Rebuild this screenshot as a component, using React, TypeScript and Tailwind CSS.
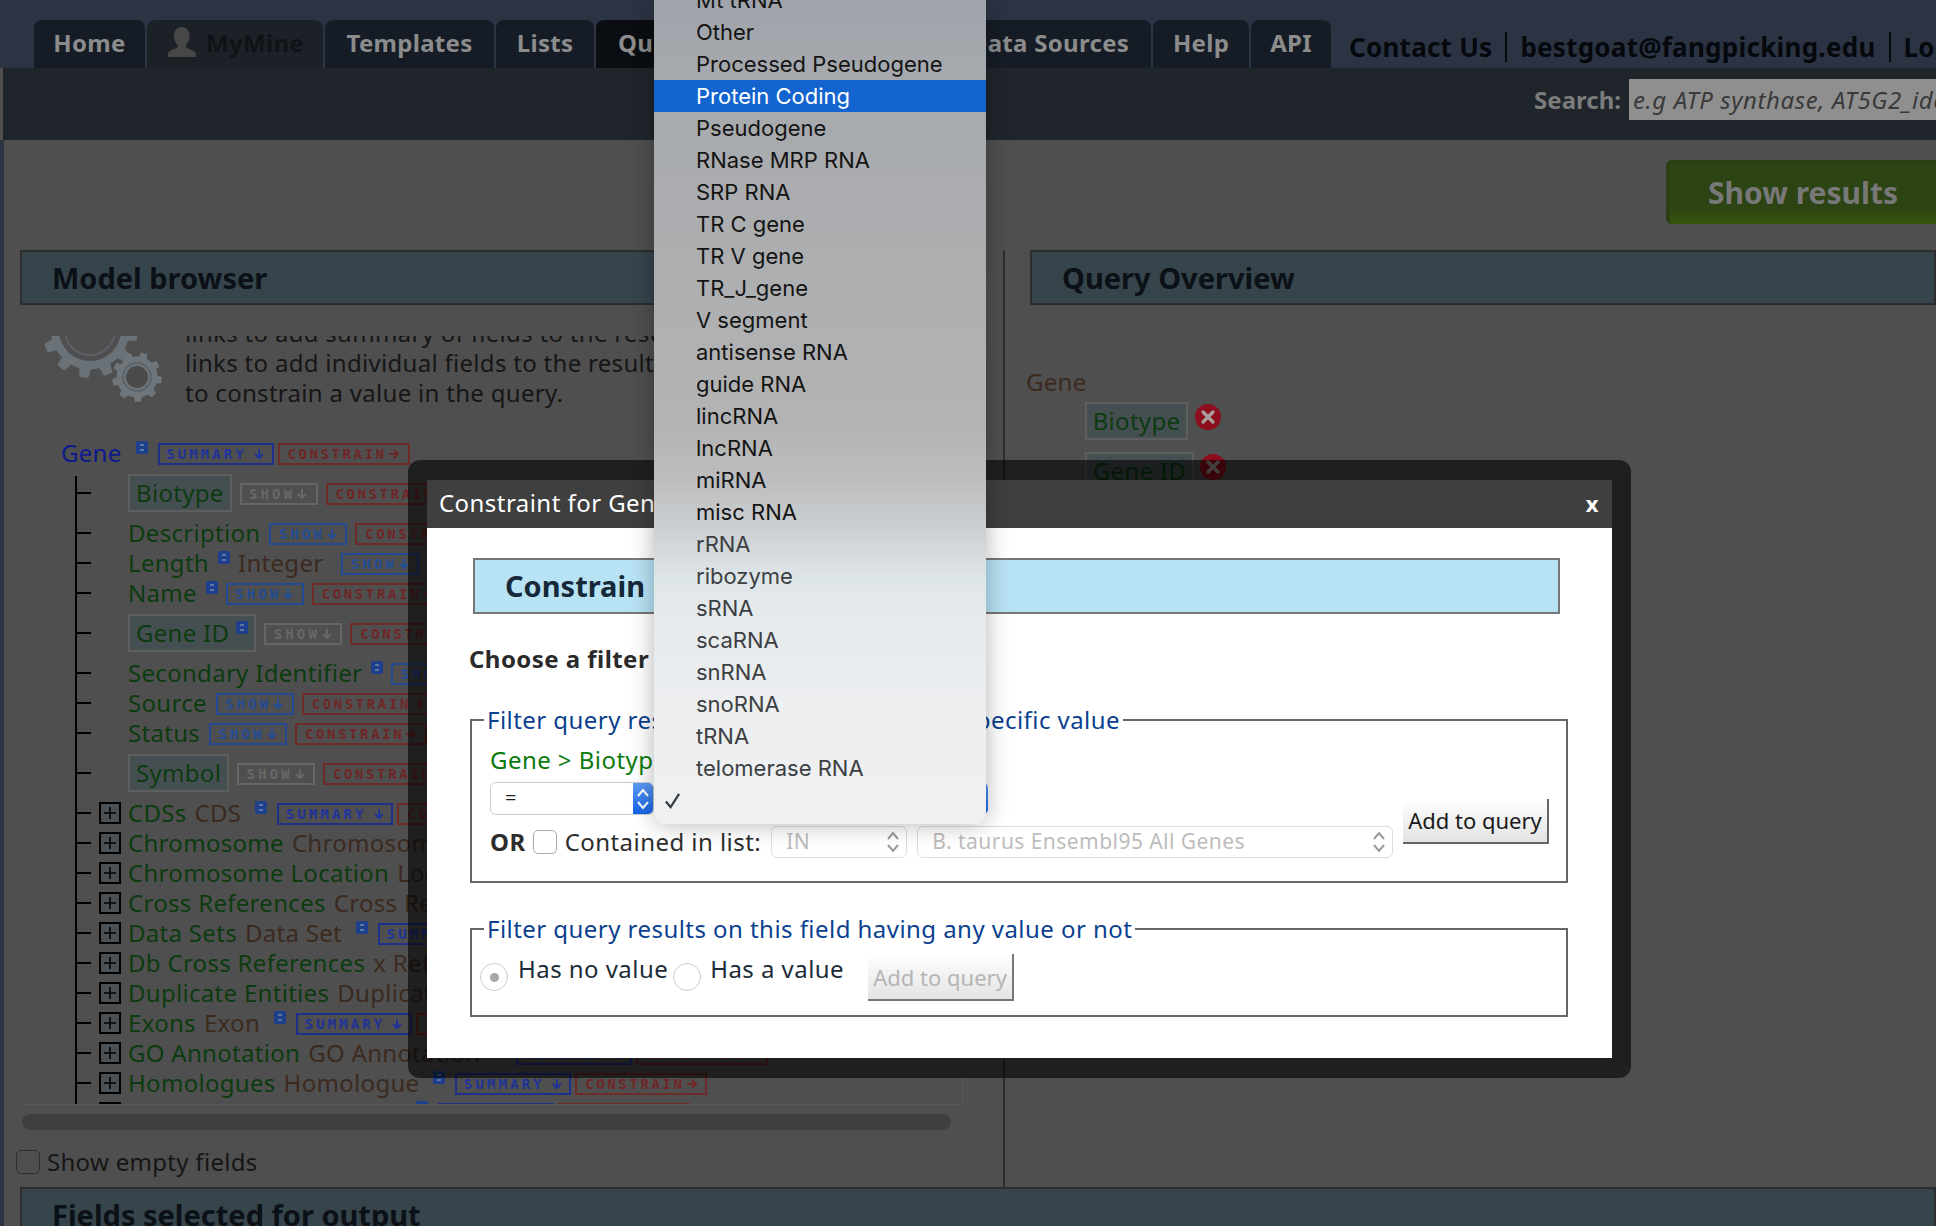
import React from "react";

function gearPoints(cx: number, cy: number, r: number, teeth: number) {
  const out: string[] = [];
  const inner = r * 0.82;
  for (let i = 0; i < teeth; i++) {
    const a = (i / teeth) * Math.PI * 2 + 0.13;
    const w = (Math.PI * 2) / teeth;
    const pts: [number, number][] = [
      [inner, a - w * 0.5],
      [inner, a - w * 0.28],
      [r, a - w * 0.18],
      [r, a + w * 0.18],
      [inner, a + w * 0.28],
    ];
    pts.forEach(([rr, t]) => out.push(`${(cx + rr * Math.cos(t)).toFixed(1)},${(cy + rr * Math.sin(t)).toFixed(1)}`));
  }
  return out.join(" ");
}

function Gears() {
  return (
    <svg viewBox="0 0 120 68" className="w-[120px] h-[68px] shrink-0 mt-[18px] ml-[22px] mr-[23px]" aria-hidden="true">
      <polygon points={gearPoints(48, -6, 48, 12)} fill="#6a7177" />
      <circle cx="48" cy="-6" r="31" fill="#4f4f4f" />
      <circle cx="48" cy="-6" r="25" fill="none" stroke="#5a6066" strokeWidth="2" />
      <polygon points={gearPoints(95, 41, 25, 9)} fill="#6e757b" />
      <circle cx="95" cy="41" r="11" fill="#4b4b4b" />
      <circle cx="95" cy="41" r="14" fill="none" stroke="#5c6369" strokeWidth="2" />
    </svg>
  );
}

function Info() {
  return (
    <span className="w-[12px] h-[13px] mb-[12px] bg-[#1d3f8e] rounded-[2px] flex items-center justify-center shrink-0">
      <span className="w-[4px] h-[7px] border-y-2 border-[#5f769f]" />
    </span>
  );
}

function Arrow({ dir, color }: { dir: "down" | "right"; color: string }) {
  return (
    <svg viewBox="0 0 12 12" className="w-[12px] h-[12px] shrink-0" aria-hidden="true" fill="none" stroke={color} strokeWidth="2">
      {dir === "down" ? <path d="M6 1v9M2 6l4 4 4-4" /> : <path d="M1 6h9M6 2l4 4-4 4" />}
    </svg>
  );
}

function Tag({ kind, dim }: { kind: "SUMMARY" | "SHOW" | "CONSTRAIN"; dim?: boolean }) {
  if (kind === "SUMMARY")
    return (
      <span className="w-[116px] h-[22px] mt-[2px] border-2 border-[#1e2f8c] text-[#1f3399] flex items-center justify-center gap-[6px] shrink-0 font-['DejaVu_Sans_Mono',monospace] font-bold text-[14px] leading-none tracking-[3.1px]">
        SUMMARY
        <Arrow dir="down" color="#1f3399" />
      </span>
    );
  if (kind === "SHOW")
    return (
      <span
        className={
          dim
            ? "w-[78px] h-[22px] mt-[2px] border-2 border-[#666] text-[#686868] flex items-center justify-center gap-[1px] shrink-0 font-['DejaVu_Sans_Mono',monospace] font-bold text-[14px] leading-none tracking-[3.1px]"
            : "w-[78px] h-[22px] mt-[2px] border-2 border-[#234a93] text-[#234d96] flex items-center justify-center gap-[1px] shrink-0 font-['DejaVu_Sans_Mono',monospace] font-bold text-[14px] leading-none tracking-[3.1px]"
        }
      >
        SHOW
        <Arrow dir="down" color={dim ? "#686868" : "#234d96"} />
      </span>
    );
  return (
    <span className="w-[132px] h-[22px] mt-[2px] border-2 border-[#6f2a2a] text-[#702626] flex items-center justify-center gap-[1px] shrink-0 font-['DejaVu_Sans_Mono',monospace] font-bold text-[14px] leading-none tracking-[2.6px]">
      CONSTRAIN
      <Arrow dir="right" color="#702626" />
    </span>
  );
}

type Row = { name: string; type?: string; info?: boolean; box?: boolean };

const attrs: Row[] = [
  { name: "Biotype", box: true },
  { name: "Description" },
  { name: "Length", info: true, type: "Integer" },
  { name: "Name", info: true },
  { name: "Gene ID", box: true, info: true },
  { name: "Secondary Identifier", info: true },
  { name: "Source" },
  { name: "Status" },
  { name: "Symbol", box: true },
];

const refs: Row[] = [
  { name: "CDSs", type: "CDS", info: true },
  { name: "Chromosome", type: "Chromosome", info: true },
  { name: "Chromosome Location", type: "Location", info: true },
  { name: "Cross References", type: "Cross Reference", info: true },
  { name: "Data Sets", type: "Data Set", info: true },
  { name: "Db Cross References", type: "x Reference", info: true },
  { name: "Duplicate Entities", type: "Duplicate Entity", info: true },
  { name: "Exons", type: "Exon", info: true },
  { name: "GO Annotation", type: "GO Annotation", info: true },
  { name: "Homologues", type: "Homologue", info: true },
  { name: "Interactions", type: "Interaction", info: true },
];

function AttrRow({ r, first }: { r: Row; first?: boolean }) {
  return (
    <li className={r.box ? (first ? "h-[42px] pb-[8px] flex items-center" : "h-[50px] flex items-center") : "h-[30px] flex items-center"}>
      <span className="w-[14px] h-[2px] bg-black shrink-0 mr-[37px]" />
      {r.box ? (
        <span className="h-[38px] px-[6px] border-2 border-[#5e5e5e] bg-[#454f52] text-[#0d3b10] flex items-center mr-[8px] shrink-0">
          {r.name}
          {r.info && <span className="ml-[7px] flex"><Info /></span>}
        </span>
      ) : (
        <>
          <span className="text-[#0d3b10] mr-[9px]">{r.name}</span>
          {r.info && <span className="mr-[8px] flex"><Info /></span>}
        </>
      )}
      {r.type && <span className="text-[#3c2a1e] mr-[18px]">{r.type}</span>}
      <Tag kind="SHOW" dim={r.box} />
      <span className="w-[8px]" />
      <Tag kind="CONSTRAIN" />
    </li>
  );
}

function RefRow({ r }: { r: Row }) {
  return (
    <li className="h-[30px] flex items-center">
      <span className="w-[14px] h-[2px] bg-black shrink-0 mr-[8px]" />
      <span className="w-[22px] h-[22px] border-2 border-black bg-[#4a5053] flex items-center justify-center mr-[7px] shrink-0">
        <svg viewBox="0 0 14 14" className="w-[14px] h-[14px]" aria-hidden="true">
          <path d="M7 1v12M1 7h12" stroke="#000" strokeWidth="1.6" />
        </svg>
      </span>
      <span className="text-[#0d3b10] mr-[8px]">{r.name}</span>
      <span className="text-[#3c2a1e] mr-[14px]">{r.type}</span>
      <span className="mr-[10px] flex"><Info /></span>
      <Tag kind="SUMMARY" />
      <span className="w-[4px]" />
      <Tag kind="CONSTRAIN" />
    </li>
  );
}

function RemoveIcon() {
  return (
    <svg viewBox="0 0 26 26" className="w-[26px] h-[26px] shrink-0" aria-hidden="true">
      <circle cx="13" cy="13" r="13" fill="#8c0d1c" />
      <path d="M8 8l10 10M18 8L8 18" stroke="#a99c9c" strokeWidth="3.4" strokeLinecap="round" />
    </svg>
  );
}

function Updown({ color }: { color: string }) {
  return (
    <svg viewBox="0 0 14 24" className="w-[14px] h-[24px]" aria-hidden="true" fill="none" stroke={color} strokeWidth="2">
      <path d="M2 9l5-6 5 6M2 15l5 6 5-6" />
    </svg>
  );
}

const tabBase = "h-[48px] rounded-t-[8px] flex items-center justify-center text-[24px] font-bold tracking-[.3px] text-[#8c8c8c] shrink-0 pb-[2px]";

const items = [
  "Other",
  "Processed Pseudogene",
  "Protein Coding",
  "Pseudogene",
  "RNase MRP RNA",
  "SRP RNA",
  "TR C gene",
  "TR V gene",
  "TR_J_gene",
  "V segment",
  "antisense RNA",
  "guide RNA",
  "lincRNA",
  "lncRNA",
  "miRNA",
  "misc RNA",
  "rRNA",
  "ribozyme",
  "sRNA",
  "scaRNA",
  "snRNA",
  "snoRNA",
  "tRNA",
  "telomerase RNA",
];

export default function App() {
  return (
    <div className="relative w-[1936px] h-[1226px] overflow-hidden bg-[#4f4f4f] font-['Noto_Sans',sans-serif] text-[24px]">
      {/* top bar */}
      <div className="h-[68px] bg-[#2c3444] pt-[20px] pl-[34px] flex gap-[2px] whitespace-nowrap">
        <div className={`${tabBase} w-[111px] bg-[#161c26]`}>Home</div>
        <div className={`${tabBase} w-[176px] bg-[#1c2127] gap-[8px]`}>
          <svg viewBox="0 0 32 36" className="w-[32px] h-[32px] mb-[2px]" aria-hidden="true">
            <path d="M16 1c6 0 9 5 8.500 11-.4 4-2 7-4 9v3c3 2 9 3 11 7v4H0v-4c2-4 8-5 11-7v-3c-2-2-3.600-5-4-9C6.500 6 10 1 16 1z" fill="#474747" />
          </svg>
          <span className="text-[#0f1317]">MyMine</span>
        </div>
        <div className={`${tabBase} w-[169px] bg-[#161c26]`}>Templates</div>
        <div className={`${tabBase} w-[98px] bg-[#161c26]`}>Lists</div>
        <div className={`${tabBase} w-[190px] bg-[#0a0e12] justify-start pl-[22px]`}>Query</div>
        <div className={`${tabBase} w-[158px] bg-[#161c26]`}>Regions</div>
        <div className={`${tabBase} w-[203px] bg-[#161c26]`}>Data Sources</div>
        <div className={`${tabBase} w-[96px] bg-[#161c26]`}>Help</div>
        <div className={`${tabBase} w-[80px] bg-[#161c26]`}>API</div>
        <div className="flex items-center h-[48px] ml-[16px] text-[26px] font-bold tracking-[.25px] text-[#05080c] pt-[6px]">
          <span className="pr-[13px] border-r-2 border-[#05080c] leading-[30px]">Contact Us</span>
          <span className="px-[13px] border-r-2 border-[#05080c] leading-[30px]">bestgoat@fangpicking.edu</span>
          <span className="pl-[13px] leading-[30px]">Log out</span>
        </div>
      </div>

      {/* search bar */}
      <div className="h-[72px] ml-[3px] bg-[#1f252b] flex items-center justify-end whitespace-nowrap pb-[9px]">
        <span className="text-[24px] font-bold text-[#7c7c7c] mr-[8px]">Search:</span>
        <div className="w-[307px] h-[41px] bg-[#8f8f8f] pl-[4px] flex items-center overflow-hidden italic text-[#3a3a3a] text-[24px] tracking-[.6px]">
          e.g ATP synthase, AT5G2_identifier
        </div>
      </div>

      {/* page */}
      <div className="h-[1086px] border-l-4 border-[#2c3444] flex flex-col">
        <div className="h-[110px] shrink-0 pt-[20px] flex justify-end">
          <div className="w-[270px] h-[64px] rounded-l-[6px] border-t-4 border-l-4 border-[#2b4012] bg-[linear-gradient(#2d4413,#2c4313_70%,#38560f)] pl-[38px] pb-[4px] flex items-center text-[30px] font-bold text-[#787878]">
            Show results
          </div>
        </div>

        <div className="h-[937px] shrink-0 flex">
          {/* left col */}
          <div className="w-[1001px] pl-[16px] pr-[36px] border-r-2 border-[#2d2d2d] shrink-0 tracking-[.3px]">
            <div className="h-[55px] border-2 border-[#2d2d2d] bg-[#36444c] pl-[30px] flex items-center font-bold text-[#0b1116] text-[29px] tracking-normal">
              Model browser
            </div>
            <div className="mt-[31px] h-[769px] overflow-hidden border-r border-b border-[#565656] w-[943px] whitespace-nowrap">
              <div className="flex h-[120px] -mt-[18px] leading-[30px] text-[#161616]">
                <Gears />
                <div>
                  <div>links to add summary of fields to the results, and CONSTRAIN</div>
                  <div>links to add individual fields to the results, and CONSTRAIN</div>
                  <div>to constrain a value in the query.</div>
                </div>
              </div>
              <div className="h-[30px] pl-[41px] flex items-center">
                <span className="text-[#0c1a8c] mr-[14px]">Gene</span>
                <span className="mr-[10px] flex"><Info /></span>
                <Tag kind="SUMMARY" />
                <span className="w-[4px]" />
                <Tag kind="CONSTRAIN" />
              </div>
              <ul className="ml-[55px] mt-[8px] border-l-2 border-black">
                {attrs.map((r, i) => (
                  <AttrRow key={r.name} r={r} first={i === 0} />
                ))}
                {refs.map((r) => (
                  <RefRow key={r.name} r={r} />
                ))}
              </ul>
            </div>
            <div className="mt-[9px] h-[16px] w-[929px] ml-[2px] rounded-full bg-[#3f3f3f]" />
            <div className="mt-[14px] flex items-center text-[#161616]">
              <span className="w-[24px] h-[24px] rounded-[5px] border border-[#2f2f2f] mr-[7px] -ml-[4px]" />
              Show empty fields
            </div>
          </div>

          {/* right col */}
          <div className="flex-1 pl-[25px] tracking-[.3px]">
            <div className="h-[55px] border-2 border-[#2d2d2d] bg-[#36444c] pl-[30px] flex items-center font-bold text-[#0b1116] text-[29px] tracking-normal">
              Query Overview
            </div>
            <div className="mt-[62px] -ml-[4px] text-[#3c2a1e] leading-[30px]">Gene</div>
            <div className="mt-[5px] ml-[55px] flex items-start gap-[7px]">
              <span className="h-[38px] w-[103px] border-2 border-[#5e5e5e] bg-[#454f52] text-[#0d3b10] flex items-center justify-center">Biotype</span>
              <span className="mt-[2px] flex"><RemoveIcon /></span>
            </div>
            <div className="mt-[12px] ml-[55px] flex items-start gap-[6px]">
              <span className="h-[38px] w-[109px] border-2 border-[#5e5e5e] bg-[#454f52] text-[#0d3b10] flex items-center justify-center">Gene ID</span>
              <span className="mt-[2px] flex"><RemoveIcon /></span>
            </div>
          </div>
        </div>

        <div className="ml-[16px] h-[55px] shrink-0 border-2 border-[#2d2d2d] bg-[#36444c] pl-[30px] flex items-center font-bold text-[#0b1116] text-[29px]">
          Fields selected for output
        </div>
      </div>

      {/* modal */}
      <div className="absolute left-[408px] top-[460px] w-[1223px] h-[618px] rounded-[12px] bg-black/60 pt-[20px] pl-[19px]">
        <div className="w-[1185px] h-[578px] bg-white flex flex-col whitespace-nowrap tracking-[.45px]">
          <div className="h-[48px] bg-[#3f3f3f] pl-[12px] pr-[13px] pb-[2px] flex items-center justify-between text-white">
            <span>Constraint for Gene &gt; Biotype</span>
            <span className="text-[22px] font-bold">x</span>
          </div>
          <div className="mt-[30px] ml-[46px] w-[1087px] h-[56px] border-2 border-[#777] bg-[#b8e3f5] pl-[30px] flex items-center font-bold text-[#16293a] text-[29px] tracking-normal">
            Constrain Gene &gt; Biotype
          </div>
          <div className="mt-[30px] ml-[42px] h-[30px] leading-[30px] font-bold text-[#2a2a2a]">Choose a filter</div>

          <fieldset className="mt-[31px] ml-[43px] w-[1098px] h-[178px] border-2 border-[#666] pl-[18px] pr-[17px]">
            <legend className="ml-[-6px] px-[3px] leading-[30px] text-[#0b3f8f]">Filter query results on this field having a specific value</legend>
            <div className="flex justify-between items-end">
              <div className="mt-[10px]">
                <div className="h-[30px] leading-[30px] text-[#0a7a0a]">Gene &gt; Biotype</div>
                <div className="mt-[7px] flex gap-[6px]">
                  <div className="w-[164px] h-[33px] rounded-[6px] border border-[#ccc] bg-white flex justify-between overflow-hidden text-[#222] text-[20px]">
                    <span className="pl-[14px]">=</span>
                    <span className="w-[20px] bg-[linear-gradient(#5d9bf5,#1464e8)] flex items-center justify-center">
                      <Updown color="#fff" />
                    </span>
                  </div>
                  <div className="w-[328px] h-[33px] rounded-[6px] bg-[linear-gradient(#5d9bf5,#1464e8)]" />
                </div>
                <div className="mt-[11px] flex items-center h-[32px] text-[#2d2d2d]">
                  <span className="font-bold mr-[7px]">OR</span>
                  <span className="w-[24px] h-[24px] rounded-[5px] border border-[#aaa] mr-[8px] bg-white" />
                  <span className="mr-[10px]">Contained in list:</span>
                  <div className="w-[136px] h-[32px] rounded-[6px] border border-[#ddd] mr-[10px] pl-[14px] pr-[6px] flex items-center justify-between text-[21px] text-[#bdbdbd]">
                    IN
                    <Updown color="#9a9a9a" />
                  </div>
                  <div className="w-[476px] h-[32px] rounded-[6px] border border-[#ddd] pl-[14px] pr-[6px] flex items-center justify-between text-[21px] text-[#bdbdbd]">
                    B. taurus Ensembl95 All Genes
                    <Updown color="#9a9a9a" />
                  </div>
                </div>
              </div>
              <button className="w-[146px] h-[45px] mb-[14px] border-r-2 border-b-2 border-[#666] bg-[linear-gradient(#ffffff,#e3e3e3)] text-[22px] tracking-normal text-[#1a1a1a]">
                Add to query
              </button>
            </div>
          </fieldset>

          <fieldset className="mt-[31px] ml-[43px] w-[1098px] h-[103px] border-2 border-[#666] pl-[8px]">
            <legend className="ml-[4px] px-[3px] leading-[30px] text-[#0b3f8f]">Filter query results on this field having any value or not</legend>
            <div className="flex items-start text-[#1c2c38]">
              <span className="mt-[19px] w-[28px] h-[28px] rounded-full border border-[#ccc] bg-white flex items-center justify-center shrink-0">
                <span className="w-[9px] h-[9px] rounded-full bg-[#a8a8a8]" />
              </span>
              <span className="ml-[10px] mt-[10px] leading-[30px]">Has no value</span>
              <span className="ml-[5px] mt-[19px] w-[28px] h-[28px] rounded-full border border-[#ccc] bg-white shrink-0" />
              <span className="ml-[9px] mt-[10px] leading-[30px]">Has a value</span>
              <button className="ml-[24px] mt-[10px] w-[146px] h-[47px] pt-[2px] border-r-2 border-b-2 border-[#777] bg-[linear-gradient(#ffffff,#e3e3e3)] text-[22px] tracking-normal text-[#b5b5b5]">
                Add to query
              </button>
            </div>
          </fieldset>
        </div>
      </div>

      {/* open select menu */}
      <div className="absolute left-[654px] top-0 w-[332px] h-[824px] rounded-b-[12px] overflow-hidden bg-[linear-gradient(#a0a4ab_0px,#a6a9ad_80px,#b3b3b3_420px,#bcbdbe_480px,#ccd0d2_530px,#dfe6e9_580px,#e6eaed_620px,#eceef0_700px,#eef0f2_824px)] shadow-[0_0_24px_rgba(0,0,0,0.3)] font-['Inter',sans-serif] text-[22px] text-[#141414] whitespace-nowrap">
        <div className="h-[32px] -mt-[16px] pl-[42px] pt-[1px] flex items-center">Mt tRNA</div>
        {items.map((t, i) => (
          <div
            key={t}
            className={
              t === "Protein Coding"
                ? "h-[32px] pl-[42px] pt-[1px] flex items-center bg-[#1464cf] text-white"
                : i >= 16
                  ? "h-[32px] pl-[42px] pt-[1px] flex items-center text-[#3c3f42]"
                  : "h-[32px] pl-[42px] pt-[1px] flex items-center"
            }
          >
            {t}
          </div>
        ))}
        <div className="h-[32px] pl-[10px] flex items-center">
          <svg viewBox="0 0 18 18" className="w-[17px] h-[17px]" aria-hidden="true" fill="none" stroke="#3c3f42" strokeWidth="2.4">
            <path d="M2 10l5 6L16 2" />
          </svg>
        </div>
      </div>
    </div>
  );
}
